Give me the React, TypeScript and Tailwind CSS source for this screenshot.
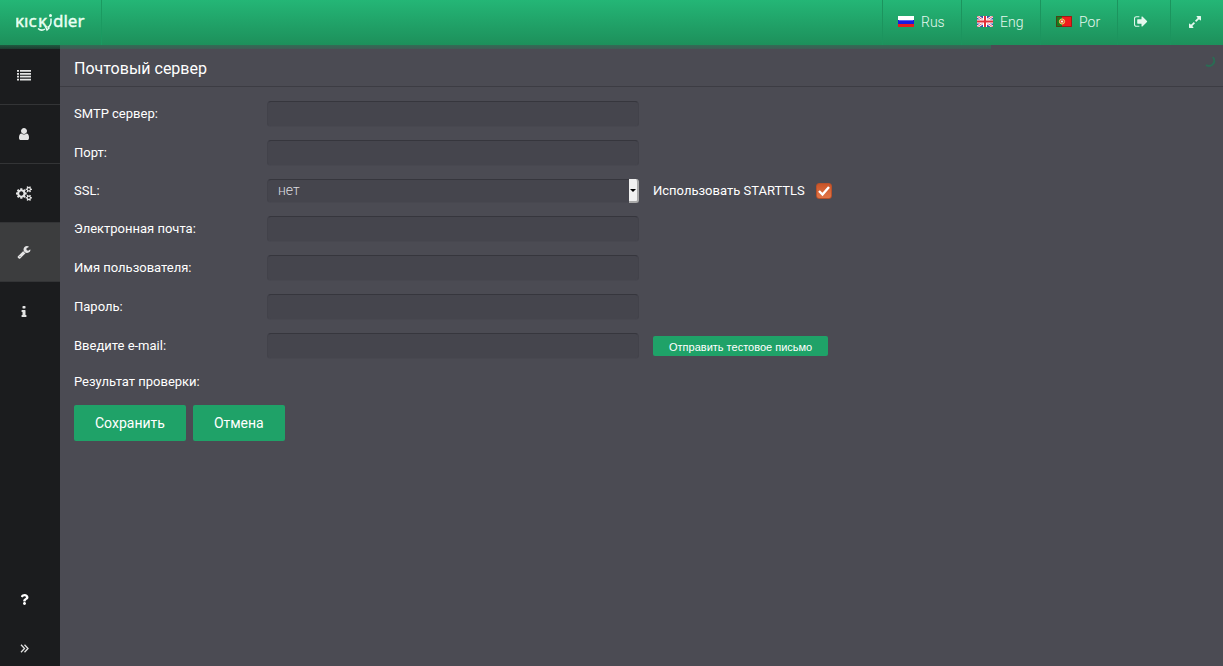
import { useState } from "react";
import type { ReactNode } from "react";
import { FaQuestion } from "react-icons/fa";

type IconProps = { d: string; className: string; viewBox?: string };

function Icon({ d, className, viewBox = "0 0 1792 1792" }: IconProps) {
  return (
    <svg viewBox={viewBox} className={className} fill="currentColor" aria-hidden="true">
      <path d={d} />
    </svg>
  );
}

const icons = {
  list: "M0 256h256v224H0zM384 256h1408v224H384zM0 624h256v224H0zM384 624h1408v224H384zM0 992h256v224H0zM384 992h1408v224H384zM0 1360h256v224H0zM384 1360h1408v224H384z",
  user: "M1536 1399q0 109-62.5 187t-150.5 78h-854q-88 0-150.5-78t-62.5-187q0-85 8.5-160.5t31.5-152 58.5-131 94-89 134.5-34.5q131 128 313 128t313-128q76 0 134.5 34.5t94 89 58.5 131 31.5 152 8.5 160.5zm-256-887q0 159-112.5 271.5t-271.5 112.5-271.5-112.5-112.5-271.5 112.5-271.5 271.5-112.5 271.5 112.5 112.5 271.5z",
  cogs: "M896 896q0-106-75-181t-181-75-181 75-75 181 75 181 181 75 181-75 75-181zm768 512q0-52-38-90t-90-38-90 38-38 90q0 53 37.5 90.5t90.5 37.5 90.5-37.5 37.5-90.5zm0-1024q0-52-38-90t-90-38-90 38-38 90q0 53 37.5 90.5t90.5 37.5 90.5-37.5 37.5-90.5zm-384 421v185q0 10-7 19.5t-16 10.5l-155 24q-11 35-32 76 34 48 90 115 7 11 7 20 0 12-7 19-23 30-82.5 89.5t-78.5 59.5q-11 0-21-7l-115-90q-37 19-77 31-11 108-23 155-7 24-30 24h-186q-11 0-20-7.5t-10-17.5l-23-153q-34-10-75-31l-118 89q-7 7-20 7-11 0-21-8-144-133-144-160 0-9 7-19 10-14 41-53t47-61q-23-44-35-82l-152-24q-10-1-17-9.5t-7-19.5v-185q0-10 7-19.5t16-10.5l155-24q11-35 32-76-34-48-90-115-7-11-7-20 0-12 7-20 22-30 82-89t79-59q11 0 21 7l115 90q34-18 77-32 11-108 23-154 7-24 30-24h186q11 0 20 7.5t10 17.5l23 153q34 10 75 31l118-89q8-7 20-7 11 0 21 8 144 133 144 160 0 8-7 19-12 16-42 54t-45 60q23 48 34 82l152 23q10 2 17 10.5t7 19.5zm640 533v140q0 16-149 31-12 27-30 52 51 113 51 138 0 4-4 7-122 71-124 71-8 0-46-47t-52-68q-20 2-30 2t-30-2q-14 21-52 68t-46 47q-2 0-124-71-4-3-4-7 0-25 51-138-18-25-30-52-149-15-149-31v-140q0-16 149-31 13-29 30-52-51-113-51-138 0-4 4-7 4-2 35-20t59-34 30-16q8 0 46 46.5t52 67.5q20-2 30-2t30 2q51-71 92-112l6-2q4 0 124 70 4 3 4 7 0 25-51 138 17 23 30 52 149 15 149 31zm0-1024v140q0 16-149 31-12 27-30 52 51 113 51 138 0 4-4 7-122 71-124 71-8 0-46-47t-52-68q-20 2-30 2t-30-2q-14 21-52 68t-46 47q-2 0-124-71-4-3-4-7 0-25 51-138-18-25-30-52-149-15-149-31v-140q0-16 149-31 13-29 30-52-51-113-51-138 0-4 4-7 4-2 35-20t59-34 30-16q8 0 46 46.5t52 67.5q20-2 30-2t30 2q51-71 92-112l6-2q4 0 124 70 4 3 4 7 0 25-51 138 17 23 30 52 149 15 149 31z",
  wrench: "M448 1472q0-26-19-45t-45-19-45 19-19 45 19 45 45 19 45-19 19-45zm644-420l-682 682q-37 37-90 37-52 0-91-37l-106-108q-38-36-38-90 0-53 38-91l681-681q39 98 114.5 173.5t173.5 114.5zm634-435q0 39-23 106-47 134-164.5 217.5t-258.5 83.5q-185 0-316.5-131.5t-131.5-316.5 131.5-316.5 316.5-131.5q58 0 121.5 16.5t107.5 46.5q16 11 16 28t-16 28l-293 169v224l193 107q5-3 79-48.5t135.5-81 70.5-35.5q15 0 23.5 10t8.5 25z",
  info: "M1216 1344v128q0 26-19 45t-45 19h-512q-26 0-45-19t-19-45v-128q0-26 19-45t45-19h64v-384h-64q-26 0-45-19t-19-45v-128q0-26 19-45t45-19h384q26 0 45 19t19 45v576h64q26 0 45 19t19 45zm-128-1152v192q0 26-19 45t-45 19h-256q-26 0-45-19t-19-45v-192q0-26 19-45t45-19h256q26 0 45 19t19 45z",
  signOut: "M640 1440q0 4 1 20t.5 26.5-3 23.5-10 19.5-20.5 6.5h-320q-119 0-203.5-84.5t-84.5-203.5v-704q0-119 84.5-203.5t203.5-84.5h320q13 0 22.5 9.5t9.5 22.5q0 4 1 20t.5 26.5-3 23.5-10 19.5-20.5 6.5h-320q-66 0-113 47t-47 113v704q0 66 47 113t113 47h312l11.5 1 11.5 3 8 5.5 7 9 2 13.5zm928-544q0 26-19 45l-544 544q-19 19-45 19t-45-19-19-45v-288h-448q-26 0-45-19t-19-45v-384q0-26 19-45t45-19h448v-288q0-26 19-45t45-19 45 19l544 544q19 19 19 45z",
  expand: "M883 1056q0 13-10 23l-332 332 144 144q19 19 19 45t-19 45-45 19h-448q-26 0-45-19t-19-45v-448q0-26 19-45t45-19 45 19l144 144 332-332q10-10 23-10t23 10l114 114q10 10 10 23zm781-864v448q0 26-19 45t-45 19-45-19l-144-144-332 332q-10 10-23 10t-23-10l-114-114q-10-10-10-23t10-23l332-332-144-144q-19-19-19-45t19-45 45-19h448q26 0 45 19t19 45z",
};

function Logo() {
  return (
    <svg width="72" height="24" viewBox="0 0 72 24" fill="#e9fff3" role="img" aria-label="kickidler">
      <g fontFamily="'Noto Sans', sans-serif" fontSize="17" stroke="#e9fff3" strokeWidth="0.4">
        <text x="-1" y="17">ĸıc</text>
        <text x="22" y="17">ĸ</text>
        <text x="37" y="17">dler</text>
      </g>
      <circle cx="34.5" cy="5.5" r="1.5" />
      <path
        d="M35 8.500v3.500q0 3.500-3.500 5.500M22 18.500q3.500 3 7 .5M29.500 16.500l1.500 3.500 2.500-2.500"
        fill="none"
        stroke="#e9fff3"
        strokeWidth="1.500"
      />
    </svg>
  );
}

function FlagRu() {
  return (
    <svg width="16" height="11" viewBox="0 0 16 11" aria-hidden="true">
      <path fill="#fff" d="M0 0h16v4H0z" />
      <path fill="#1a1ae0" d="M0 4h16v4H0z" />
      <path fill="#5a62f0" d="M1 4h14v1H1z" />
      <path fill="#e81c1c" d="M0 8h16v3H0z" />
    </svg>
  );
}

function FlagGb() {
  return (
    <svg width="16" height="11" viewBox="0 0 16 11" aria-hidden="true">
      <path fill="#3f4fa8" d="M0 0h16v11H0z" />
      <path stroke="#fff" strokeWidth="2.500" d="M0 0l16 11M16 0L0 11" />
      <path stroke="#e0303a" strokeWidth="0.8" d="M0 0l16 11M16 0L0 11" />
      <path stroke="#fff" strokeWidth="4" d="M8 0v11M0 5.500h16" />
      <path stroke="#e0303a" strokeWidth="2" d="M8 0v11M0 5.500h16" />
    </svg>
  );
}

function FlagPt() {
  return (
    <svg width="16" height="11" viewBox="0 0 16 11" aria-hidden="true">
      <path fill="#f01c1c" d="M0 0h16v11H0z" />
      <path fill="#1c7a1c" d="M0 0h6v11H0z" />
      <circle cx="6" cy="5.500" r="2.600" fill="#e8563a" stroke="#e8d860" />
      <circle cx="6" cy="5.500" r="1" fill="#fff" />
      <path fill="none" stroke="#6b1a10" opacity=".6" d="M.5.5h15v10H.5z" />
    </svg>
  );
}

const languages = [
  { label: "Rus", flag: <FlagRu />, width: "w-[79px]" },
  { label: "Eng", flag: <FlagGb />, width: "w-[79px]" },
  { label: "Por", flag: <FlagPt />, width: "w-[77px]" },
];

function Header() {
  const cell = "flex items-center border-l border-[#1c945e] pb-[2px]";
  return (
    <header className="flex h-[45px] shrink-0 bg-linear-to-b from-[#24b676] to-[#1d905b] text-[#e4f8ee]">
      <a href="#" className="flex w-[102px] items-center border-r border-[#1b9a61] pb-px pl-4">
        <Logo />
      </a>
      <nav className="ml-auto flex">
        {languages.map(({ label, flag, width }) => (
          <a key={label} href="#" className={`${cell} ${width} gap-[7px] pl-[15px] text-sm font-light`}>
            {flag}
            {label}
          </a>
        ))}
        <button type="button" aria-label="Выход" className={`${cell} w-[53px] pl-4`}>
          <Icon d={icons.signOut} className="size-[15px]" />
        </button>
        <button type="button" aria-label="Во весь экран" className={`${cell} w-[53px] pl-[17px]`}>
          <Icon d={icons.expand} className="size-[14px]" />
        </button>
      </nav>
    </header>
  );
}

const menu: { label: string; icon: ReactNode; active?: boolean }[] = [
  { label: "Список", icon: <Icon d={icons.list} className="size-[14px]" /> },
  { label: "Пользователи", icon: <Icon d={icons.user} className="size-[14px]" /> },
  { label: "Параметры", icon: <Icon d={icons.cogs} viewBox="0 0 1920 1792" className="h-[15px] w-4" /> },
  { label: "Сервер", icon: <Icon d={icons.wrench} className="size-[14px]" />, active: true },
  { label: "Информация", icon: <Icon d={icons.info} className="size-[14px]" /> },
];

function Sidebar() {
  return (
    <aside className="flex w-[60px] shrink-0 flex-col bg-[#1b1c1e] pt-px text-[#e4e4e4]">
      {menu.map(({ label, icon, active }, i) => (
        <a
          key={label}
          href="#"
          aria-label={label}
          className={`flex h-[59px] w-full items-center justify-center pr-3 ${
            active ? "bg-[#3c3d3e]" : ""
          } ${i < menu.length - 1 ? "border-b border-[#333436]" : ""}`}
        >
          {icon}
        </a>
      ))}
      <div className="mt-auto pb-[6px]">
        <a href="#" aria-label="Помощь" className="flex h-[49px] items-center justify-center pr-3 text-white">
          <FaQuestion size={11} />
        </a>
        <button type="button" aria-label="Развернуть" className="mt-3 flex h-6 w-full items-center justify-center pr-3">
          <svg width="9" height="9" viewBox="0 0 9 9" fill="none" stroke="currentColor" strokeWidth="1.3" aria-hidden="true">
            <path d="M1 .8l3.500 3.700L1 8.200M4.500.8L8 4.500 4.500 8.200" />
          </svg>
        </button>
      </div>
    </aside>
  );
}

const fieldStyle =
  "w-[372px] rounded-[4px] border border-[#42424a] border-t-[#36363d] border-b-[#484850] bg-[#45454d] px-[10px] text-sm text-[#dcdce0] outline-none";

type RowProps = { id: string; label: string; children?: ReactNode };

function Row({ id, label, children }: RowProps) {
  return (
    <div className="flex items-center">
      <label htmlFor={id} className="w-[193px]">
        {label}
      </label>
      {children}
    </div>
  );
}

function TextRow({ id, label, type = "text", children }: RowProps & { type?: string }) {
  return (
    <Row id={id} label={label}>
      <input id={id} type={type} className={`${fieldStyle} h-[26px]`} />
      {children}
    </Row>
  );
}

export default function App() {
  const [ssl, setSsl] = useState("no");
  const [startTls, setStartTls] = useState(true);

  return (
    <div className="flex min-h-screen flex-col bg-[#4b4b53] font-[Roboto,sans-serif] text-[13px] leading-4 text-white">
      <Header />
      <div className="relative flex flex-1">
        <div className="absolute top-0 left-0 h-1 w-[81%] bg-linear-to-b from-[#228257]/60 to-[#228257]/30" />
        <Sidebar />
        <main className="min-w-0 flex-1">
          <div className="flex h-[42px] items-center justify-between border-b border-[#3c3c43] pt-[6px] pl-[14px]">
            <h1 className="text-base leading-6">Почтовый сервер</h1>
            <svg width="20" height="20" viewBox="0 0 20 20" fill="none" className="-mt-3" aria-hidden="true">
              <path d="M10 4q3 5-1 8-3 2-6 0" stroke="#2b6b54" strokeWidth="2" />
            </svg>
          </div>

          <form className="px-[14px] pt-[14px]" onSubmit={(e) => e.preventDefault()}>
            <div className="flex flex-col gap-[13px]">
              <TextRow id="smtp" label="SMTP сервер:" />
              <TextRow id="port" label="Порт:" />
              <Row id="ssl" label="SSL:">
                <div className="relative">
                  <select
                    id="ssl"
                    value={ssl}
                    onChange={(e) => setSsl(e.target.value)}
                    className={`${fieldStyle} block h-6 appearance-none pb-[2px] font-light`}
                  >
                    <option value="no">нет</option>
                    <option value="yes">да</option>
                  </select>
                  <span className="pointer-events-none absolute inset-y-0 right-0 flex w-[10px] items-center justify-center rounded-r-[3px] border-r-2 border-b-2 border-[#a9a9a9] bg-[#f0f0f0]">
                    <svg width="6" height="3" viewBox="0 0 6 3" aria-hidden="true">
                      <path d="M0 0h6L3 3z" />
                    </svg>
                  </span>
                </div>
                <label htmlFor="starttls" className="pl-[14px]">
                  Использовать STARTTLS
                </label>
                <span className="relative ml-[11px] size-4">
                  <input
                    id="starttls"
                    type="checkbox"
                    checked={startTls}
                    onChange={(e) => setStartTls(e.target.checked)}
                    className="block size-4 appearance-none rounded-[3px] border border-[#b8502a] bg-[#45454d] checked:bg-linear-to-b checked:from-[#c95528] checked:to-[#e27547]"
                  />
                  {startTls && (
                    <svg viewBox="0 0 16 16" className="pointer-events-none absolute inset-0" aria-hidden="true">
                      <path d="M3 8l3.500 3.500L13 4" fill="none" stroke="#fff" strokeWidth="2.400" />
                    </svg>
                  )}
                </span>
              </Row>
              <TextRow id="email" label="Электронная почта:" />
              <TextRow id="user" label="Имя пользователя:" />
              <TextRow id="password" label="Пароль:" type="password" />
              <TextRow id="test-email" label="Введите e-mail:">
                <button
                  type="button"
                  className="ml-[14px] h-5 rounded-[2px] bg-[#1fa268] px-4 pt-[2px] font-['Liberation_Sans',sans-serif] text-[11px]"
                >
                  Отправить тестовое письмо
                </button>
              </TextRow>
            </div>

            <p className="py-[15px]">Результат проверки:</p>
            <div className="flex gap-[7px] text-sm">
              <button type="submit" className="h-9 rounded-[2px] bg-[#1fa268] px-[21px]">
                Сохранить
              </button>
              <button type="button" className="h-9 rounded-[2px] bg-[#1fa268] px-[21px]">
                Отмена
              </button>
            </div>
          </form>
        </main>
      </div>
    </div>
  );
}
